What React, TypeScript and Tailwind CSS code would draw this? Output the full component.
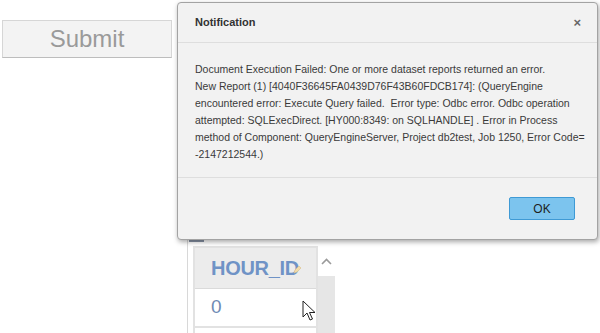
export default function App() {
  return (
    <div className="relative w-[600px] h-[333px] overflow-hidden bg-white font-['Liberation_Sans',Arial,sans-serif]">
      {/* Page behind the dialog */}
      <div className="pt-[20px] pl-[2px]">
        <button className="w-[170px] h-[38px] bg-[#f3f3f3] border border-[#d6d6d6] border-b-[#bdbdbd] text-[24px] leading-none text-[#9a9a9a]">
          Submit
        </button>
      </div>

      <div className="ml-[187px] mt-[178px] flex h-[140px] border-l border-[#d8d8d8]">
        <div className="flex flex-col">
          <div className="ml-[1px] w-[15px] h-[6px] bg-[#8793a6]" />
          <div className="ml-[5px] mt-[4px] flex flex-1">
            <div className="w-[125px] border-2 border-[#e2e2e2] border-b-0">
              <div className="h-[41px] bg-[#ececec] flex items-center pl-[16px] border-b border-[#dadada]">
                <span className="text-[20px] font-bold text-[#6f93c6] tracking-[-0.3px]">HOUR_ID</span>
                <svg width="9" height="9" viewBox="0 0 9 9" className="-ml-[6px] mt-[2px]">
                  <path d="M1 8 L2 5 L6 1 L8 3 L4 7 Z" fill="#f3dcaa" stroke="#d8c08a" strokeWidth="0.6" />
                </svg>
              </div>
              <div className="h-[39px] bg-white flex items-center pl-[16px] border-b-2 border-[#e2e2e2]">
                <span className="text-[19px] text-[#6f8bb5]">0</span>
              </div>
            </div>
            <div className="w-[17px] flex flex-col">
              <div className="h-[30px] bg-white flex items-center justify-center">
                <svg width="11" height="7" viewBox="0 0 11 7">
                  <path d="M1 6 L5.5 1.5 L10 6" fill="none" stroke="#9a9a9a" strokeWidth="1.6" />
                </svg>
              </div>
              <div className="flex-1 bg-[#e6e6e6]" />
            </div>
          </div>
        </div>
      </div>

      {/* Mouse cursor */}
      <svg className="absolute left-[302px] top-[300px]" width="14" height="22" viewBox="0 0 14 22">
        <path d="M1 1 L1 17 L5 13 L8 20 L10.5 19 L7.5 12.5 L13 12.5 Z" fill="#fff" stroke="#222" strokeWidth="1" strokeLinejoin="round" />
      </svg>

      {/* Notification dialog */}
      <div className="absolute left-[177px] top-[2px] w-[421px] h-[238px] flex flex-col rounded-[4px] border border-[#a3a3a3] bg-[#f2f2f2] shadow-[1px_2px_5px_rgba(0,0,0,0.35)]">
        <div className="h-[40px] shrink-0 flex items-center justify-between pl-[17px] pr-[16px] border-b border-[#dedede]">
          <span className="text-[11px] font-bold text-[#333]">Notification</span>
          <span className="text-[13px] font-bold text-[#666] leading-none">×</span>
        </div>
        <div className="flex-1 pl-[17px] pt-[18px] text-[10.5px] leading-[17px] text-[#3a3a3a] whitespace-pre">
          <div>Document Execution Failed: One or more dataset reports returned an error.</div>
          <div>New Report (1) [4040F36645FA0439D76F43B60FDCB174]: (QueryEngine</div>
          <div>encountered error: Execute Query failed.  Error type: Odbc error. Odbc operation</div>
          <div>attempted: SQLExecDirect. [HY000:8349: on SQLHANDLE] . Error in Process</div>
          <div>method of Component: QueryEngineServer, Project db2test, Job 1250, Error Code=</div>
          <div>-2147212544.)</div>
        </div>
        <div className="h-[62px] shrink-0 flex justify-end items-start pt-[19px] pr-[22px] border-t border-[#dedede]">
          <button className="w-[66px] h-[23px] rounded-[2px] bg-[#7cc4ee] border border-[#3f9ad5] text-[12px] text-[#1e1e1e]">
            OK
          </button>
        </div>
      </div>
    </div>
  );
}
